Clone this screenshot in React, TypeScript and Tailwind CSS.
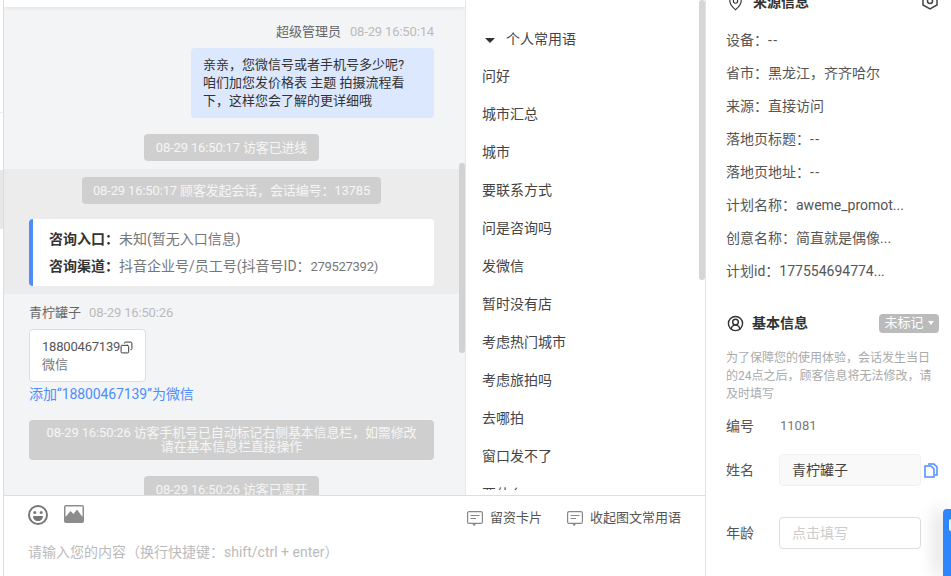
import React from 'react';
import { Copy, MapPin, CircleUserRound } from 'lucide-react';

const phrases = ['问好', '城市汇总', '城市', '要联系方式', '问是咨询吗', '发微信', '暂时没有店', '考虑热门城市', '考虑旅拍吗', '去哪拍', '窗口发不了', '要什么'];

const sourceRows = [
    { label: '设备：', value: '--' },
    { label: '省市：', value: '黑龙江，齐齐哈尔' },
    { label: '来源：', value: '直接访问' },
    { label: '落地页标题：', value: '--' },
    { label: '落地页地址：', value: '--' },
    { label: '计划名称：', value: 'aweme_promot...' },
    { label: '创意名称：', value: '简直就是偶像...' },
    { label: '计划id：', value: '177554694774...' },
];

const Pill: React.FC<{ children: React.ReactNode; className?: string }> = ({ children, className }) => (
    <div className={`rounded-sm bg-[#cfcfcf] text-center text-[13px] tracking-[-0.15px] text-white/80 ${className ?? ''}`}>{children}</div>
);

const CardIcon: React.FC<{ className?: string }> = ({ className }) => (
    <svg width="16" height="15" viewBox="0 0 16 15" fill="none" stroke="#888" strokeWidth="1.2" className={className}>
        <rect x="0.6" y="0.6" width="14.8" height="11.8" rx="1.5" />
        <path d="M3.5 4.5h9M3.5 7.5h5.5" />
        <path d="M6 12.6l1.2 1.6 1.2-1.6" />
    </svg>
);

const ChatPanel: React.FC = () => (
    <div className="relative flex-1 min-w-0 overflow-hidden bg-[#f3f4f6]">
        <div className="h-[7px] bg-white shadow-[0_1px_4px_rgba(0,0,0,0.08)]" />
        <div className="pr-[31px] pl-[25px] pt-[16px]">
            <div className="flex justify-end gap-[9px] text-[13px] leading-[18px]">
                <span className="text-[#666]">超级管理员</span>
                <span className="tracking-[-0.15px] text-[#bbb]">08-29 16:50:14</span>
            </div>
            <div className="mt-[7px] flex justify-end">
                <div className="w-[243px] rounded bg-[#dce8fe] pl-3 pr-[28px] py-2 text-[13px] leading-[18px] text-[#333]">
                    亲亲，您微信号或者手机号多少呢?咱们加您发价格表 主题 拍摄流程看下，这样您会了解的更详细哦
                </div>
            </div>
            <div className="mt-4 flex justify-center">
                <Pill className="h-[27px] w-[175px] leading-[27px]">08-29 16:50:17 访客已进线</Pill>
            </div>
        </div>
        <div className="mt-2 h-[125px] bg-[#ececec] pt-2 pr-[31px] pl-[25px]">
            <div className="flex justify-center">
                <Pill className="h-[27px] w-[299px] leading-[27px]">08-29 16:50:17 顾客发起会话，会话编号：13785</Pill>
            </div>
            <div className="mt-[15px] h-[67px] rounded-sm border-l-4 border-[#4d8dff] bg-white pl-4 py-[7px] text-sm leading-[27px] text-[#777]">
                <div><b className="font-bold text-[#333]">咨询入口：</b>未知(暂无入口信息)</div>
                <div><b className="font-bold text-[#333]">咨询渠道：</b>抖音企业号/员工号(抖音号ID：<span className="text-[13px] tracking-[-0.3px]">279527392)</span></div>
            </div>
        </div>
        <div className="pr-[31px] pl-[25px] pt-[10px]">
            <div className="flex gap-[8px] text-[13px] leading-[18px]">
                <span className="text-[#666]">青柠罐子</span>
                <span className="tracking-[-0.15px] text-[#bbb]">08-29 16:50:26</span>
            </div>
            <div className="mt-[7px] h-[53px] w-[117px] rounded border border-[#ddd] bg-white pl-3 pt-2 text-[13px] leading-[18px] text-[#555]">
                <div className="flex items-center tracking-[-0.2px]">
                    18800467139
                    <Copy size={13} strokeWidth={1.8} className="-scale-x-100 text-[#333]" />
                </div>
                <div className="text-[#777]">微信</div>
            </div>
            <div className="mt-[3px] text-sm leading-[18px] tracking-[-0.1px] text-[#4d8dff]">添加“18800467139”为微信</div>
            <Pill className="mt-[17px] flex h-10 items-center justify-center px-3 leading-[14px]">
                <span>08-29 16:50:26 访客手机号已自动标记右侧基本信息栏，如需修改<br />请在基本信息栏直接操作</span>
            </Pill>
            <div className="mt-4 flex justify-center">
                <Pill className="h-[27px] w-[175px] leading-[27px]">08-29 16:50:26 访客已离开</Pill>
            </div>
        </div>
        <div className="absolute right-0 top-[163px] h-[190px] w-[6px] rounded-[3px] bg-[#d2d2d2]" />
    </div>
);

const PhrasePanel: React.FC = () => (
    <div className="relative h-[495px] w-[240px] shrink-0 overflow-hidden border-l border-[#e8e8e8] bg-white">
        <div className="h-[490px] overflow-hidden pl-4">
            <div className="mt-[20px] mb-[8px] flex h-[29px] items-end gap-[11px] pl-[3px] text-sm leading-5 text-[#444]">
                <span className="mb-[6px] h-0 w-0 border-x-[5px] border-t-[5px] border-x-transparent border-t-[#333]" />
                <span>个人常用语</span>
            </div>
            {phrases.map((p) => (
                <div key={p} className="h-[38px] text-sm leading-[38px] text-[#444]">{p}</div>
            ))}
        </div>
        <div className="absolute right-0 top-0 h-[280px] w-[6px] rounded-[3px] bg-[#d6d6d6]" />
    </div>
);

const InputBar: React.FC = () => (
    <div className="relative h-[81px] border-t border-[#dedede] bg-white">
        <div className="flex items-start gap-4 pl-[24px] pt-[9px]">
            <svg width="20" height="20" viewBox="0 0 20 20" fill="none">
                <circle cx="10" cy="10" r="9" stroke="#777" strokeWidth="2" />
                <circle cx="6.8" cy="7.5" r="1.5" fill="#777" />
                <circle cx="13.2" cy="7.5" r="1.5" fill="#777" />
                <path d="M5 11h10c0 3-2.2 5-5 5s-5-2-5-5z" fill="#777" />
            </svg>
            <svg width="20" height="20" viewBox="0 0 20 20">
                <rect x="0" y="0" width="20" height="18" rx="2" fill="#8c8c8c" />
                <rect x="1.5" y="1.5" width="17" height="10" fill="#fff" />
                <path d="M1.5 12l5-6 3 3 3.5-4.5 5.5 7.5V13h-17z" fill="#8c8c8c" />
            </svg>
            <div className="ml-auto mt-[4px] flex items-center pr-[24px] text-[13px] leading-[18px] text-[#555]">
                <CardIcon className="mr-[7px]" />
                <span>留资卡片</span>
                <CardIcon className="ml-[25px] mr-[7px]" />
                <span>收起图文常用语</span>
            </div>
        </div>
        <div className="mt-[16px] pl-[24px] text-sm leading-[18px] text-[#bbb]">请输入您的内容（换行快捷键：shift/ctrl + enter）</div>
    </div>
);

const RightPanel: React.FC = () => (
    <div className="relative w-[246px] shrink-0 overflow-hidden border-l border-[#e4e4e4] bg-white pl-5 pr-[30px] text-sm text-[#555]">
        <div className="-mt-[8px] flex h-5 items-center gap-[9px] pl-[1px] font-bold leading-5 text-[#333]">
            <MapPin size={17} strokeWidth={1.6} />
            <span>来源信息</span>
            <svg width="18" height="18" viewBox="0 0 18 18" fill="none" className="ml-auto -mr-[18px] -mt-[3px]" stroke="#444" strokeWidth="1.5">
                <path d="M9 1l7 4v8l-7 4-7-4V5z" />
                <circle cx="9" cy="9" r="2.5" />
            </svg>
        </div>
        <div className="mt-[12px]">
            {sourceRows.map((r) => (
                <div key={r.label} className="h-[33px] leading-[33px]">
                    {r.label}
                    <span className={r.value === '--' ? 'tracking-[1.5px]' : ''}>{r.value}</span>
                </div>
            ))}
        </div>
        <div className="mt-[25px] flex h-5 items-center gap-[8px] pl-[1px] font-bold leading-5 text-[#333]">
            <CircleUserRound size={17} strokeWidth={2} />
            <span>基本信息</span>
            <div className="-mr-[18px] ml-auto flex h-[19px] w-[60px] items-center justify-center gap-[4px] rounded-sm bg-[#bbb] text-[13px] font-normal text-white">
                未标记
                <span className="h-0 w-0 border-x-[3px] border-t-[4px] border-x-transparent border-t-white" />
            </div>
        </div>
        <p className="mt-[16px] -mr-[12px] text-xs leading-[18px] text-[#aaa]">为了保障您的使用体验，会话发生当日的24点之后，顾客信息将无法修改，请及时填写</p>
        <div className="mt-[14px] flex h-[18px] items-center leading-[18px]">
            <span className="w-[54px] shrink-0">编号</span>
            <span className="text-[13px] text-[#777]">11081</span>
        </div>
        <div className="mt-[19px] flex items-center">
            <span className="w-[53px] shrink-0">姓名</span>
            <div className="flex h-[32px] w-[142px] shrink-0 items-center rounded-sm border border-[#f1f1f1] bg-[#f9f9f9] pl-3 text-[#444]">青柠罐子</div>
            <svg width="14" height="15" viewBox="0 0 14 15" fill="none" stroke="#4d8dff" strokeWidth="1.5" className="ml-[3px] shrink-0">
                <path d="M4 1h6l3 3v8h-2" />
                <path d="M1 3h6l3 3v8H1z" />
            </svg>
        </div>
        <div className="mt-[31px] flex items-center">
            <span className="w-[53px] shrink-0">年龄</span>
            <div className="flex h-[32px] w-[142px] shrink-0 items-center rounded-sm border border-[#ddd] pl-3 text-[#ccc]">点击填写</div>
        </div>
    </div>
);

export default function App() {
    return (
        <div className="relative flex h-[576px] w-[951px] overflow-hidden bg-white font-['Roboto','Noto_Sans_CJK_SC',sans-serif] [font-variant-ligatures:none] [text-spacing-trim:space-all]">
            <div className="w-[4px] shrink-0 border-r border-[#dcdcdc] bg-white">
                <div className="h-[113px] border-b border-[#eeeeee]" />
                <div className="mt-[57px] h-[59px] bg-[#e8e8e8]" />
            </div>
            <div className="flex w-[701px] shrink-0 flex-col">
                <div className="flex h-[495px]">
                    <ChatPanel />
                    <PhrasePanel />
                </div>
                <InputBar />
            </div>
            <RightPanel />
            <div className="absolute right-0 top-[509px] h-[67px] w-2 rounded-tl bg-[#2e86ff] pt-[10px] pl-[6px] shadow-[-6px_0_18px_rgba(0,0,0,0.2)]">
                <div className="h-3 w-[2px] rounded-l-sm bg-white/90" />
            </div>
        </div>
    );
}
